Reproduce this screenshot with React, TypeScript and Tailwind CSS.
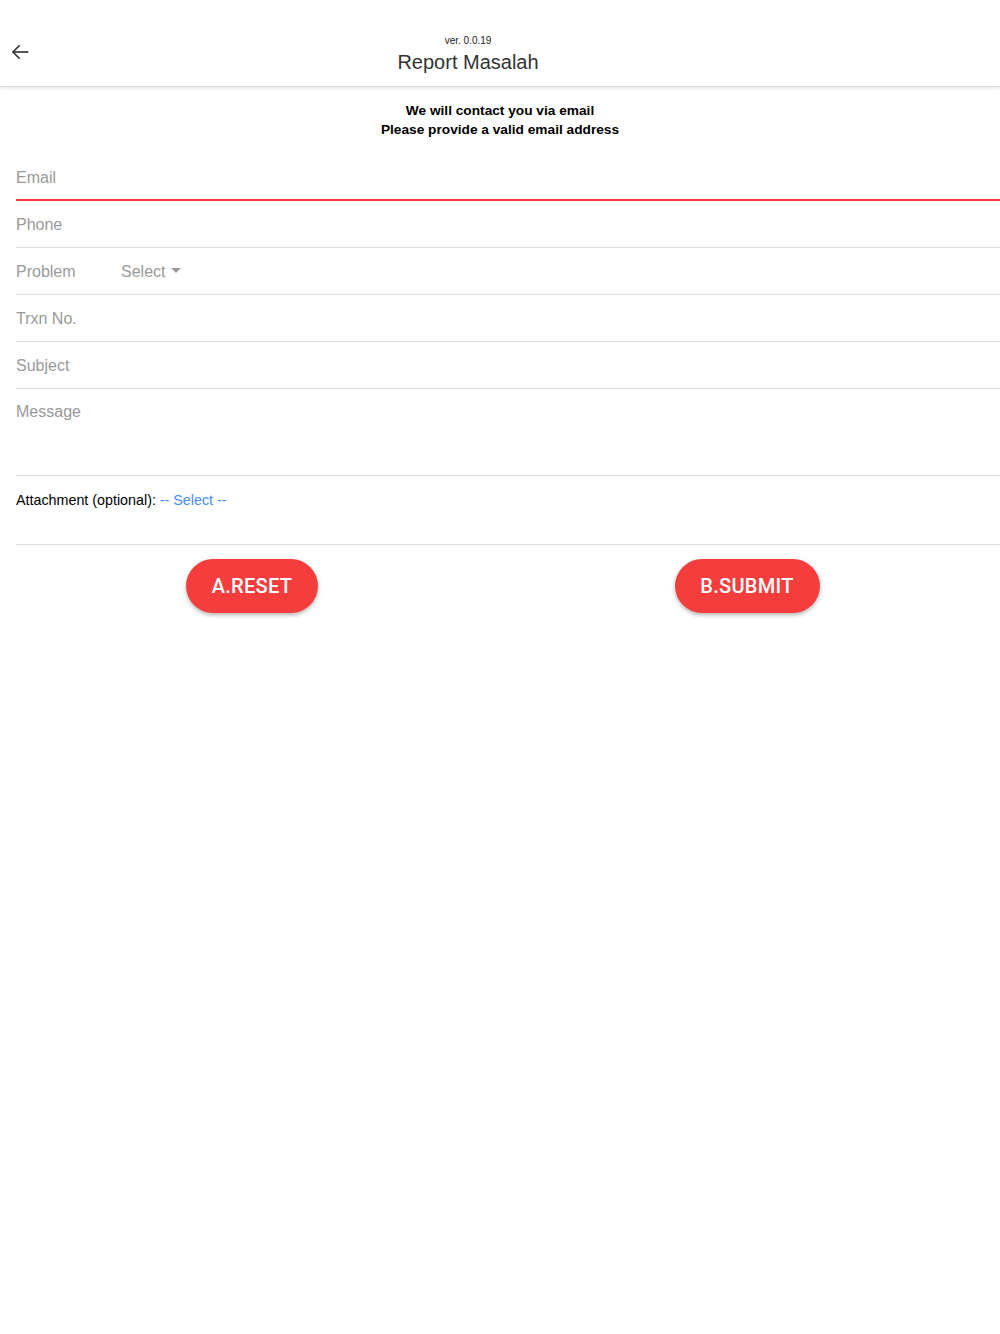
import React from "react";

export default function App() {
  const font = { fontFamily: '"Liberation Sans", Arial, sans-serif' };
  return (
    <div className="w-[1000px] min-h-[1334px] bg-white" style={font}>
      {/* Header */}
      <div className="relative h-[87px] flex items-end border-b border-[#d8d8d8] shadow-[0_2px_3px_rgba(0,0,0,0.08)]">
        <div className="w-[40px] h-full flex items-center justify-start pl-[10px] pt-[18px]">
          <svg width="20" height="20" viewBox="0 0 24 24" fill="none" stroke="#333" strokeWidth="2" strokeLinecap="square">
            <path d="M21 12H4" />
            <path d="M11 4.5l-7.5 7.5 7.5 7.5" strokeLinecap="round" strokeLinejoin="round" />
          </svg>
        </div>
        <div className="flex-1 h-full flex flex-col items-center pt-[35px] pr-[104px]">
          <div className="text-[10px] leading-[12px] text-[#222]">ver. 0.0.19</div>
          <div className="text-[20px] leading-[28px] text-[#333] mt-[1px]">Report Masalah</div>
        </div>
      </div>

      {/* Info */}
      <div className="pt-[14px] text-center text-[13.7px] leading-[19px] font-bold text-black">
        <div>We will contact you via email</div>
        <div>Please provide a valid email address</div>
      </div>

      {/* Form */}
      <div className="pl-[16px] mt-[14px]">
        <div className="h-[48px] border-b-2 border-[#f53d3d] flex items-center pt-[3px] text-[16px] text-[#999]">
          Email
        </div>
        <div className="h-[47px] border-b border-[#dedede] flex items-center pt-[2px] text-[16px] text-[#999]">
          Phone
        </div>
        <div className="h-[47px] border-b border-[#dedede] flex items-center pt-[2px] text-[16px] text-[#999]">
          <span className="w-[105px]">Problem</span>
          <span>Select</span>
          <svg className="ml-[6px] -mt-[3px]" width="10" height="5" viewBox="0 0 10 5">
            <path d="M0 0h10L5 5z" fill="#999" />
          </svg>
        </div>
        <div className="h-[47px] border-b border-[#dedede] flex items-center pt-[2px] text-[16px] text-[#999]">
          Trxn No.
        </div>
        <div className="h-[47px] border-b border-[#dedede] flex items-center pt-[2px] text-[16px] text-[#999]">
          Subject
        </div>
        <div className="h-[87px] border-b border-[#dedede] pt-[14px] text-[16px] leading-[18px] text-[#999]">
          Message
        </div>
        <div className="h-[69px] border-b border-[#dedede] pt-[16px] text-[14.3px] leading-[16px] text-black">
          Attachment (optional): <span className="text-[#488aff]">-- Select --</span>
        </div>
      </div>

      {/* Buttons */}
      <div className="grid grid-cols-2 mt-[14px]">
        <div className="flex justify-center">
          <button
            className="h-[54px] w-[132px] rounded-full bg-[#f53d3d] text-white text-[20px] font-medium tracking-[0.3px] shadow-[0_2px_4px_rgba(0,0,0,0.3)] ml-[4px]"
            style={{ fontFamily: 'Roboto, "Liberation Sans", sans-serif' }}
          >
            A.RESET
          </button>
        </div>
        <div className="flex justify-center">
          <button
            className="h-[54px] w-[145px] rounded-full bg-[#f53d3d] text-white text-[20px] font-medium tracking-[0.3px] shadow-[0_2px_4px_rgba(0,0,0,0.3)] -ml-[6px]"
            style={{ fontFamily: 'Roboto, "Liberation Sans", sans-serif' }}
          >
            B.SUBMIT
          </button>
        </div>
      </div>
    </div>
  );
}
